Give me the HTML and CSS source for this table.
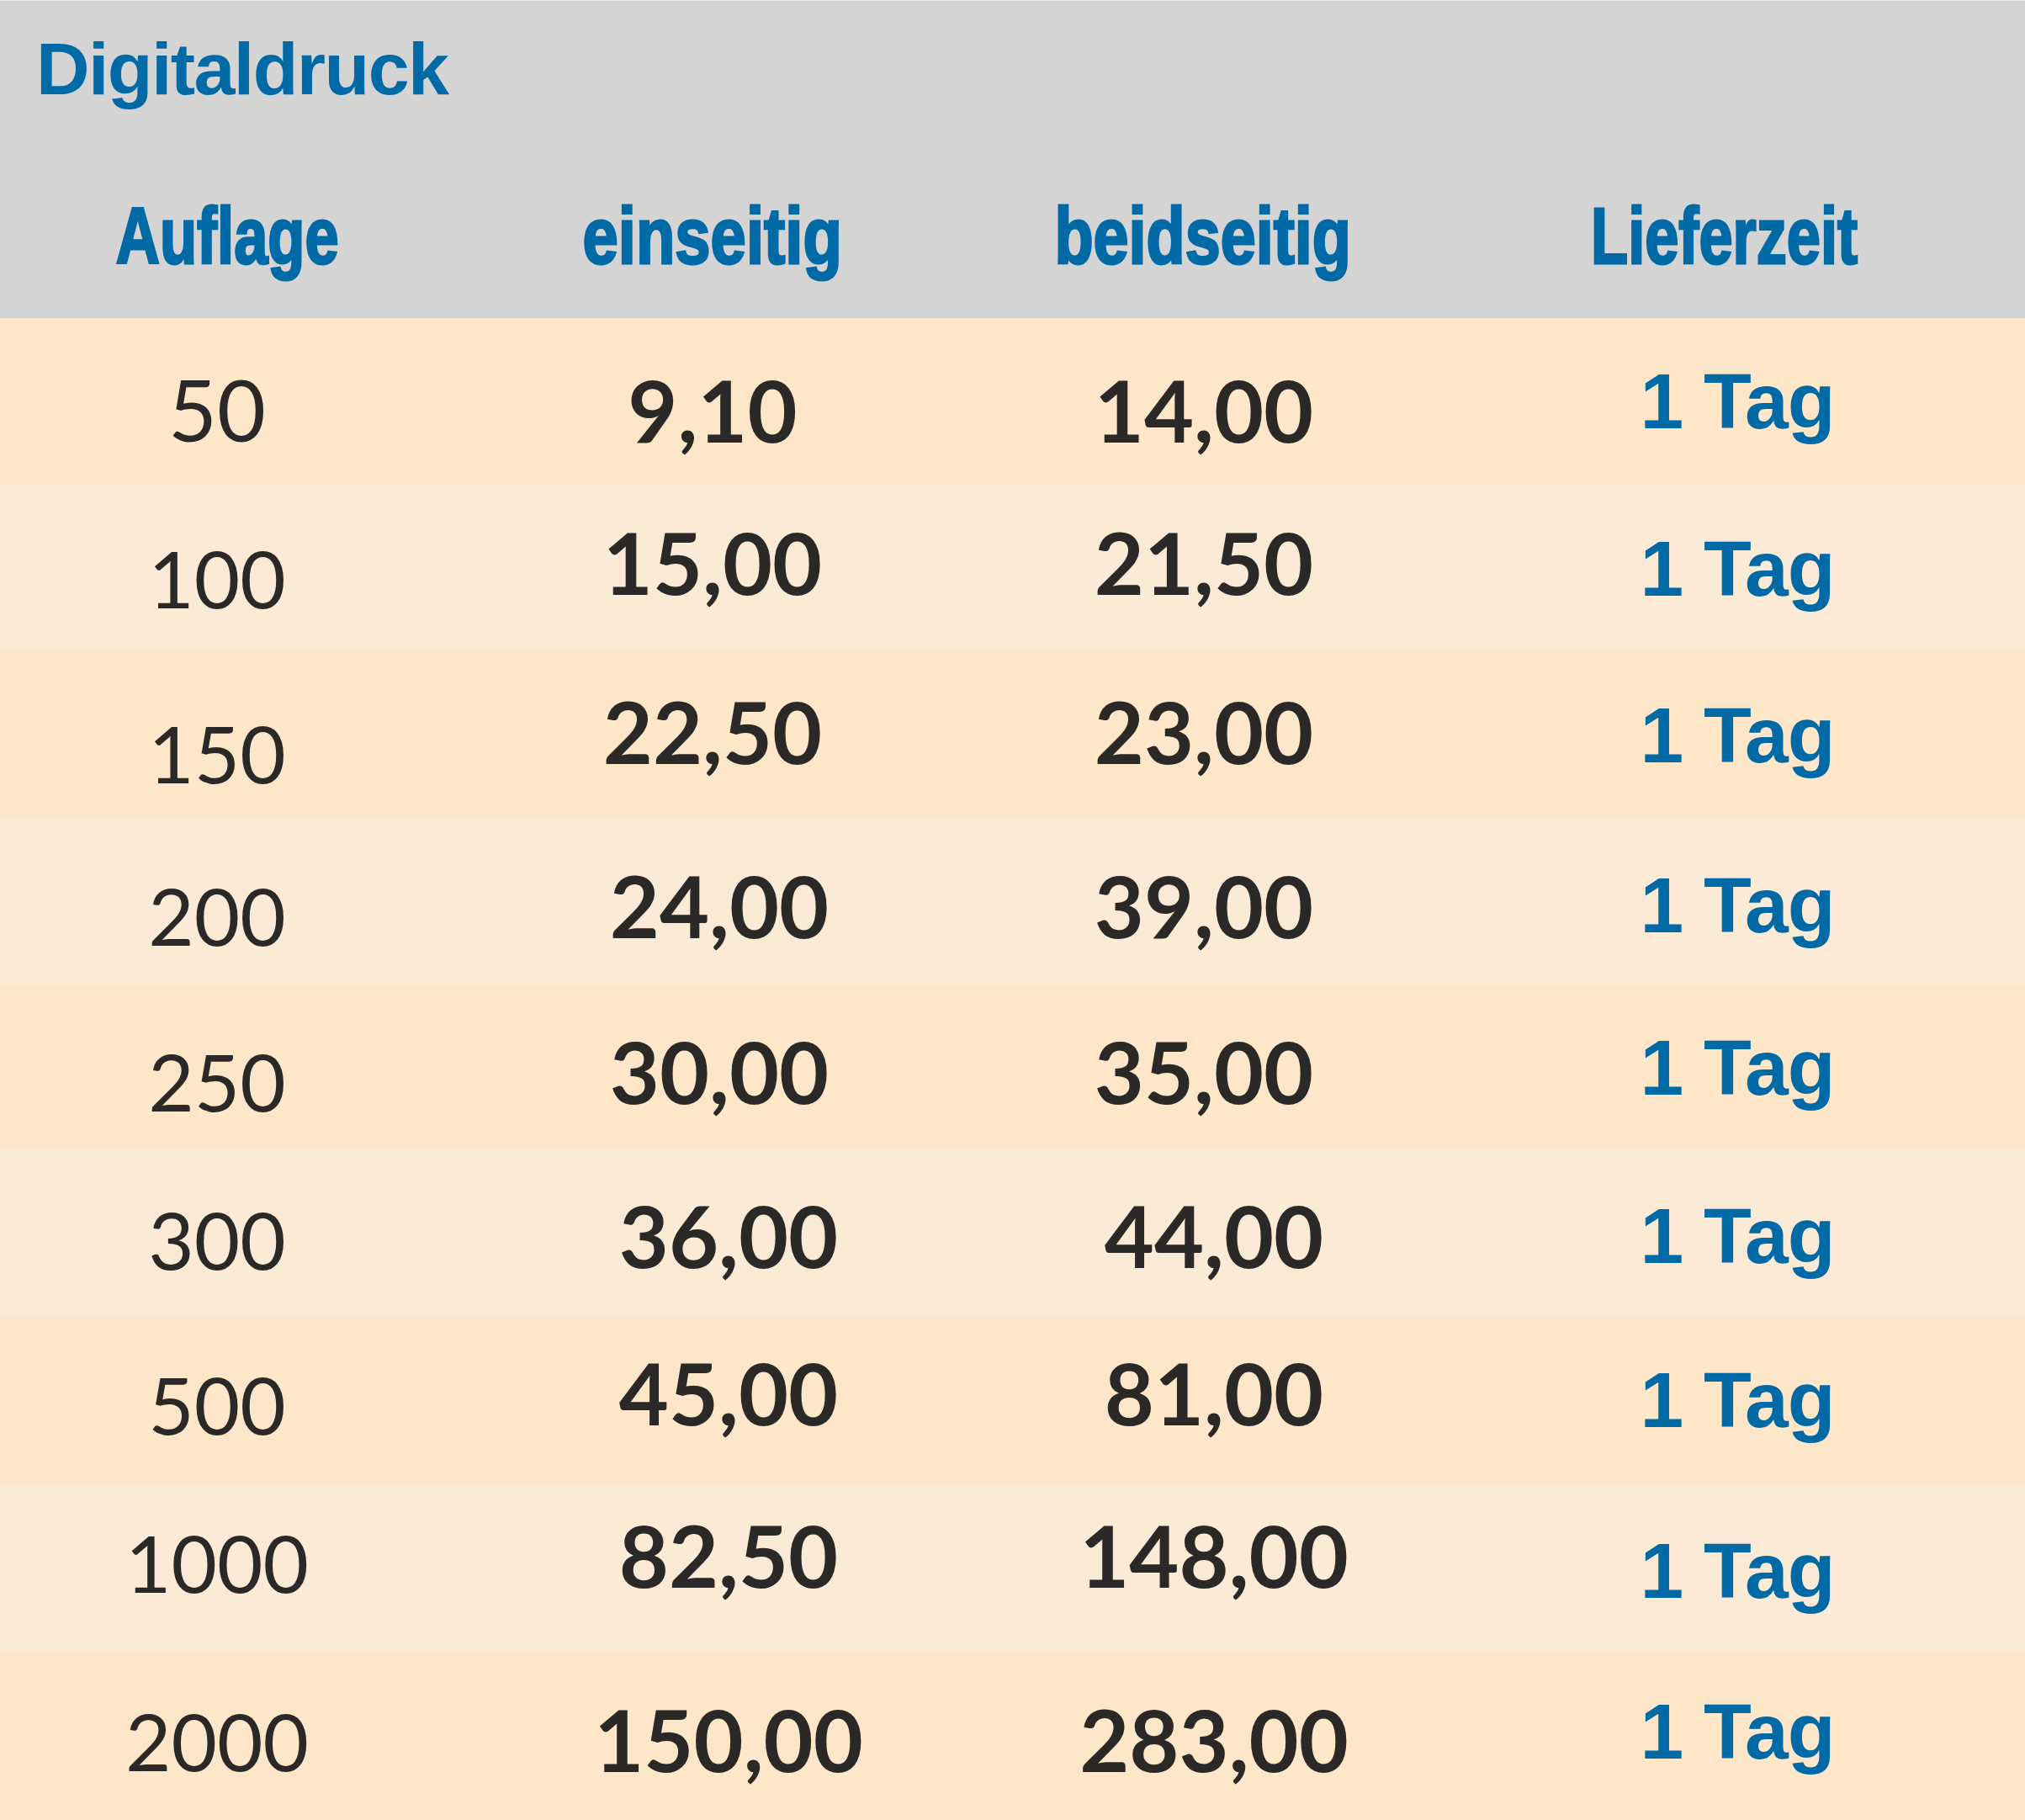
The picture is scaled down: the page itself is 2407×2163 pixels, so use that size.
FILE: index.html
```html
<!DOCTYPE html>
<html lang="de">
<head>
<meta charset="utf-8">
<title>Digitaldruck</title>
<link rel="stylesheet" href="styles.css">
</head>
<body>
<div class="sheet">
  <header class="head">
    <h1 class="title">Digitaldruck</h1>
    <div class="head-cols">
      <div class="hc"><span class="hc-auflage">Auflage</span></div>
      <div class="hc"><span class="hc-ein">einseitig</span></div>
      <div class="hc"><span class="hc-beid">beidseitig</span></div>
      <div class="hc"><span class="hc-liefer">Lieferzeit</span></div>
    </div>
  </header>
  <div class="rows">
    <div class="row odd r1"><div class="c qty">50</div><div class="c price p1">9,10</div><div class="c price p2">14,00</div><div class="c tag">1 Tag</div></div>
    <div class="row even r2"><div class="c qty">100</div><div class="c price p1">15,00</div><div class="c price p2">21,50</div><div class="c tag">1 Tag</div></div>
    <div class="row odd r3"><div class="c qty">150</div><div class="c price p1">22,50</div><div class="c price p2">23,00</div><div class="c tag">1 Tag</div></div>
    <div class="row even r4"><div class="c qty">200</div><div class="c price p1">24,00</div><div class="c price p2">39,00</div><div class="c tag">1 Tag</div></div>
    <div class="row odd r5"><div class="c qty">250</div><div class="c price p1">30,00</div><div class="c price p2">35,00</div><div class="c tag">1 Tag</div></div>
    <div class="row even r6"><div class="c qty">300</div><div class="c price p1">36,00</div><div class="c price p2">44,00</div><div class="c tag">1 Tag</div></div>
    <div class="row odd r7"><div class="c qty">500</div><div class="c price p1">45,00</div><div class="c price p2">81,00</div><div class="c tag">1 Tag</div></div>
    <div class="row even r8"><div class="c qty">1000</div><div class="c price p1">82,50</div><div class="c price p2">148,00</div><div class="c tag">1 Tag</div></div>
    <div class="row odd r9"><div class="c qty">2000</div><div class="c price p1">150,00</div><div class="c price p2">283,00</div><div class="c tag">1 Tag</div></div>
  </div>
</div>
</body>
</html>
```
FILE: styles.css
```css
html, body {
  margin: 0;
  padding: 0;
}
body {
  width: 2407px;
  height: 2163px;
  overflow: hidden;
  background: #fee6c8;
}
.sheet {
  display: flex;
  flex-direction: column;
  height: 2163px;
}
.head {
  height: 378px;
  box-sizing: border-box;
  border-top: 1px solid #e6e6e6;
  background: #d4d4d4;
  display: flex;
  flex-direction: column;
}
.title {
  margin: 0;
  padding: 37px 0 0 43px;
  font: bold 88px/1 "Liberation Sans", Arial, sans-serif;
  letter-spacing: -1.6px;
  color: #006aa7;
}
.head-cols {
  display: grid;
  grid-template-columns: 540px 614px 552px 688px;
  margin-top: 107px;
}
.hc {
  text-align: center;
  font: bold 95px/1 "Liberation Sans", Arial, sans-serif;
  color: #006aa7;
}
.hc span {
  display: inline-block;
  transform: scaleX(0.76);
  -webkit-text-stroke: 3px #006aa7;
}
.hc .hc-ein { transform: scaleX(0.8); }
.hc .hc-beid { transform: scaleX(0.795); }
.rows {
  display: flex;
  flex-direction: column;
  flex: 1;
}
.row {
  display: grid;
  grid-template-columns: 516px 662px 506px 1fr;
  box-sizing: border-box;
  --q: 60px;
  --p: 50px;
  --t: 55px;
  --dx2: 0px;
  --dx3: 0px;
}
.odd { background: #fee6c8; }
.even { background: #fbead5; }
.c {
  text-align: center;
  line-height: 1;
  color: #2b2928;
}
.qty {
  font: 400 94px/1 Lato, "Open Sans", sans-serif;
  padding-top: var(--q);
}
.price {
  font: 700 102px/1 Lato, "Open Sans", sans-serif;
  padding-top: var(--p);
}
.p1 { padding-left: var(--dx2); }
.p2 { padding-left: var(--dx3); }
.tag {
  font: bold 93px/1 "Liberation Sans", Arial, sans-serif;
  letter-spacing: -1px;
  color: #006aa7;
  padding-top: var(--t);
  padding-left: 39px;
}
.r1 { height: 199px; --q: 58px; --p: 58px; --t: 53px; }
.r1 .qty { font-size: 100px; }
.r2 { height: 194px; --q: 63px; --p: 40px; --t: 53px; }
.r3 { height: 199px; --q: 77px; --p: 47px; --t: 57px; }
.r4 { height: 200px; --q: 71px; --p: 55px; --t: 60px; --dx2: 16px; }
.r5 { height: 196px; --q: 68px; --p: 52px; --t: 53px; --dx2: 16px; }
.r6 { height: 199px; --q: 60px; --p: 51px; --t: 57px; --dx2: 38px; --dx3: 24px; }
.r7 { height: 198px; --q: 57px; --p: 39px; --t: 53px; --dx2: 38px; --dx3: 24px; }
.r8 { height: 199px; --q: 47px; --p: 34px; --t: 58px; --dx2: 38px; --dx3: 24px; }
.r9 { height: 201px; --q: 60px; --p: 54px; --t: 50px; --dx2: 38px; --dx3: 24px; }
```
